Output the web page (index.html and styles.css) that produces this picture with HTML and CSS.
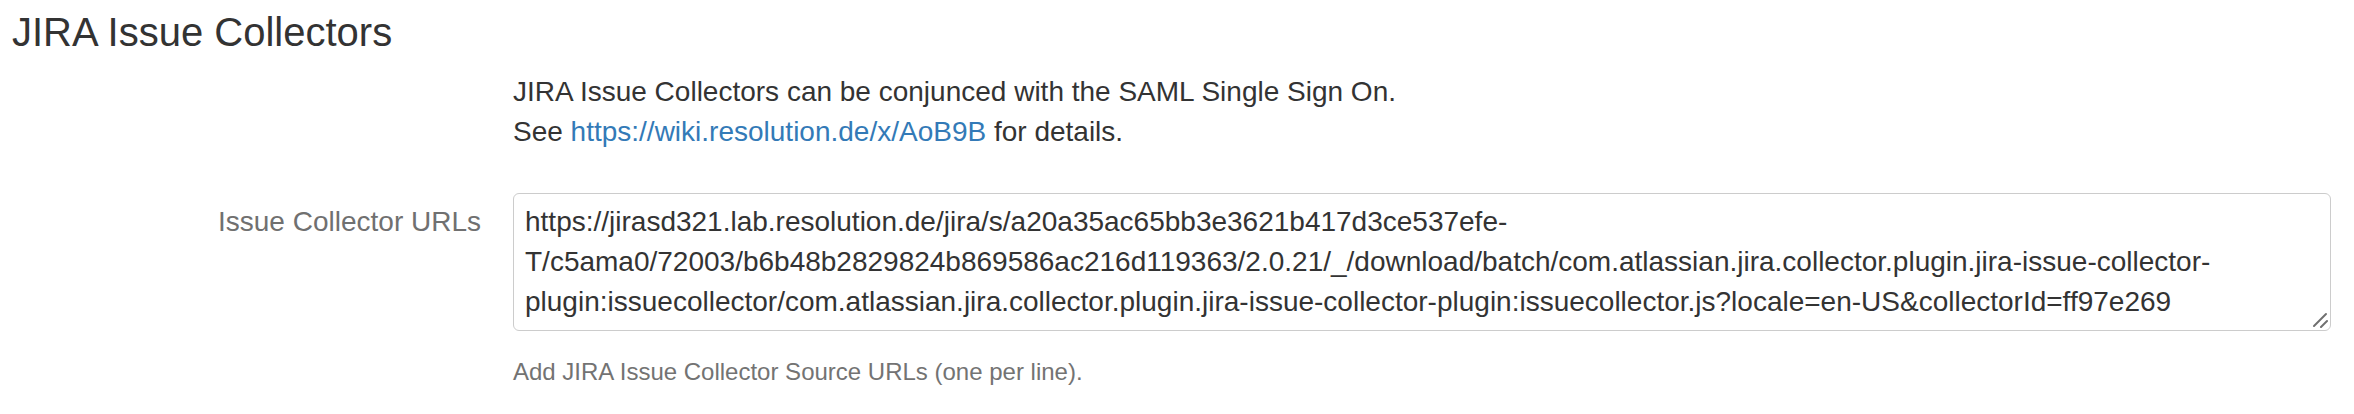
FILE: index.html
```html
<!DOCTYPE html>
<html lang="en">
<head>
<meta charset="utf-8">
<title>JIRA Issue Collectors</title>
<link rel="stylesheet" href="styles.css">
</head>
<body>
<div class="page">
  <h2 class="title">JIRA Issue Collectors</h2>
  <div class="form-grid">
    <div class="intro">
      JIRA Issue Collectors can be conjunced with the SAML Single Sign On.<br>
      See <a href="#" class="link">https://wiki.resolution.de/x/AoB9B</a> for details.
    </div>
    <label class="field-label" for="urls">Issue Collector URLs</label>
    <div class="field">
      <div class="textarea-wrap">
        <textarea id="urls" class="control" rows="3" spellcheck="false">https://jirasd321.lab.resolution.de/jira/s/a20a35ac65bb3e3621b417d3ce537efe-T/c5ama0/72003/b6b48b2829824b869586ac216d119363/2.0.21/_/download/batch/com.atlassian.jira.collector.plugin.jira-issue-collector-plugin:issuecollector/com.atlassian.jira.collector.plugin.jira-issue-collector-plugin:issuecollector.js?locale=en-US&amp;collectorId=ff97e269</textarea>
        <svg class="grip" width="16" height="16" viewBox="0 0 16 16" aria-hidden="true">
          <line x1="2" y1="14" x2="14" y2="2" />
          <line x1="9" y1="15" x2="15" y2="9" />
        </svg>
      </div>
      <p class="help">Add JIRA Issue Collector Source URLs (one per line).</p>
    </div>
  </div>
</div>
</body>
</html>
```

FILE: styles.css
```css
html, body {
  margin: 0;
  padding: 0;
  background: #ffffff;
}

body {
  font-family: "Liberation Sans", Arial, Helvetica, sans-serif;
  font-size: 28px;
  line-height: 40px;
  color: #333333;
}

.page {
  padding: 0 23px 0 12px;
}

.title {
  margin: 10px 0 0;
  font-size: 40px;
  line-height: 44px;
  font-weight: normal;
  color: #333333;
}

.form-grid {
  display: grid;
  grid-template-columns: 469px 1fr;
  column-gap: 32px;
  margin-top: 18px;
}

.intro {
  grid-column: 2;
  margin-bottom: 41px;
}

.link {
  color: #337ab7;
  text-decoration: none;
}

.field-label {
  grid-column: 1;
  text-align: right;
  padding-top: 9px;
  color: #707070;
}

.field {
  grid-column: 2;
}

.textarea-wrap {
  position: relative;
}

.control {
  display: block;
  box-sizing: border-box;
  width: 100%;
  height: 138px;
  margin: 0;
  padding: 8px 12px 8px 11px;
  border: 1px solid #cccccc;
  border-radius: 6px;
  font-family: "Liberation Sans", Arial, Helvetica, sans-serif;
  font-size: 28px;
  line-height: 40px;
  color: #333333;
  background: #ffffff;
  resize: none;
  overflow: hidden;
  outline: none;
}

.grip {
  position: absolute;
  right: 3px;
  bottom: 3px;
  stroke: #6f6f6f;
  stroke-width: 2;
  stroke-linecap: round;
}

.help {
  margin: 24px 0 0;
  font-size: 24px;
  line-height: 34px;
  color: #737373;
}
```
